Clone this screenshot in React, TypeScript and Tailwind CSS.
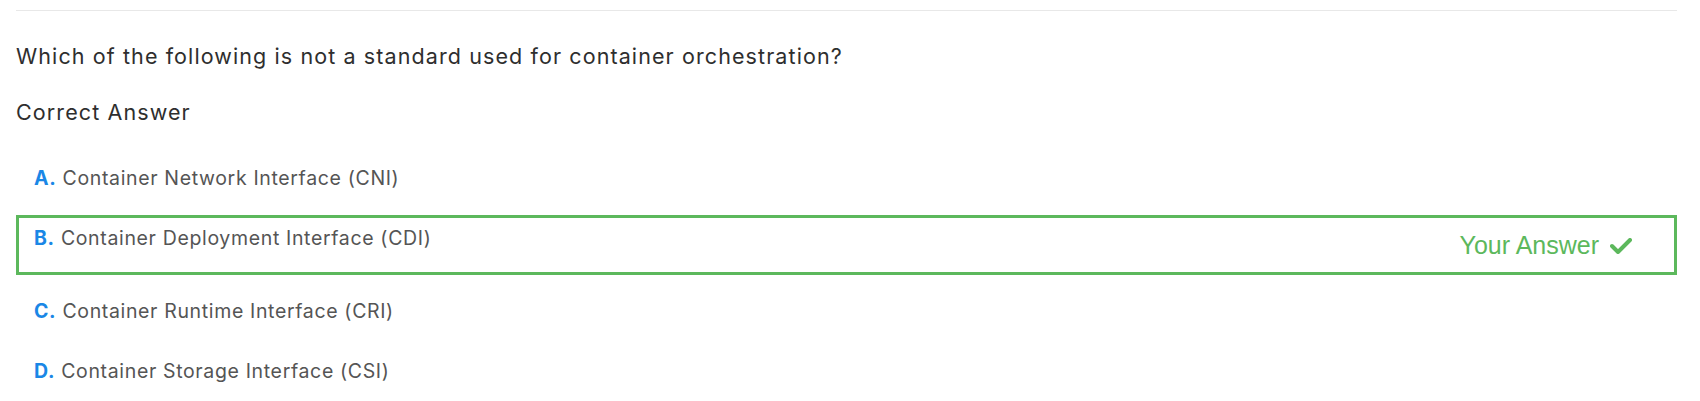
type Option = { key: string; text: string; picked?: boolean }

const options: Option[] = [
  { key: 'A', text: 'Container Network Interface (CNI)' },
  { key: 'B', text: 'Container Deployment Interface (CDI)', picked: true },
  { key: 'C', text: 'Container Runtime Interface (CRI)' },
  { key: 'D', text: 'Container Storage Interface (CSI)' },
]

export default function App() {
  return (
    <div className="min-h-[401px] bg-white pl-4 pr-[23px] pt-[10px] font-['Inter',sans-serif]">
      <div className="border-t border-[#e8e8e8]" />
      <p className="mt-[31px] text-[21.5px] leading-[28px] tracking-[1.1px] text-[#2e2e2e]">
        Which of the following is not a standard used for container orchestration?
      </p>
      <p className="mt-[28px] text-[21.5px] leading-[28px] tracking-[1.1px] text-[#2e2e2e]">Correct Answer</p>

      <div className="mt-[29px]">
        {options.map(o => (
          <div
            key={o.key}
            className={
              o.picked
                ? 'mb-[13px] flex h-[60px] items-start justify-between border-[3px] border-[#5cb85c] pl-[15px] pr-[42px] pt-[7px]'
                : 'flex h-[60px] items-start border-[3px] border-transparent pl-[15px] pt-[7px]'
            }
          >
            <span className="text-[19.5px] leading-[26px] tracking-[0.65px] text-[#555]">
              <span className="font-bold text-[#1a87e6]">{o.key}.</span> {o.text}
            </span>
            {o.picked && (
              <span className="mt-[6px] flex items-center gap-[11px] font-['Liberation_Sans',Arial,sans-serif] text-[25px] leading-[28px] text-[#5cb85c]">
                Your Answer
                <svg width="22" height="16" viewBox="0 0 22 16" fill="none" className="mt-[2px]">
                  <polyline points="2,8 8,14 20,2" stroke="#5cb85c" strokeWidth="4" strokeLinecap="round" strokeLinejoin="round" />
                </svg>
              </span>
            )}
          </div>
        ))}
      </div>
    </div>
  )
}
